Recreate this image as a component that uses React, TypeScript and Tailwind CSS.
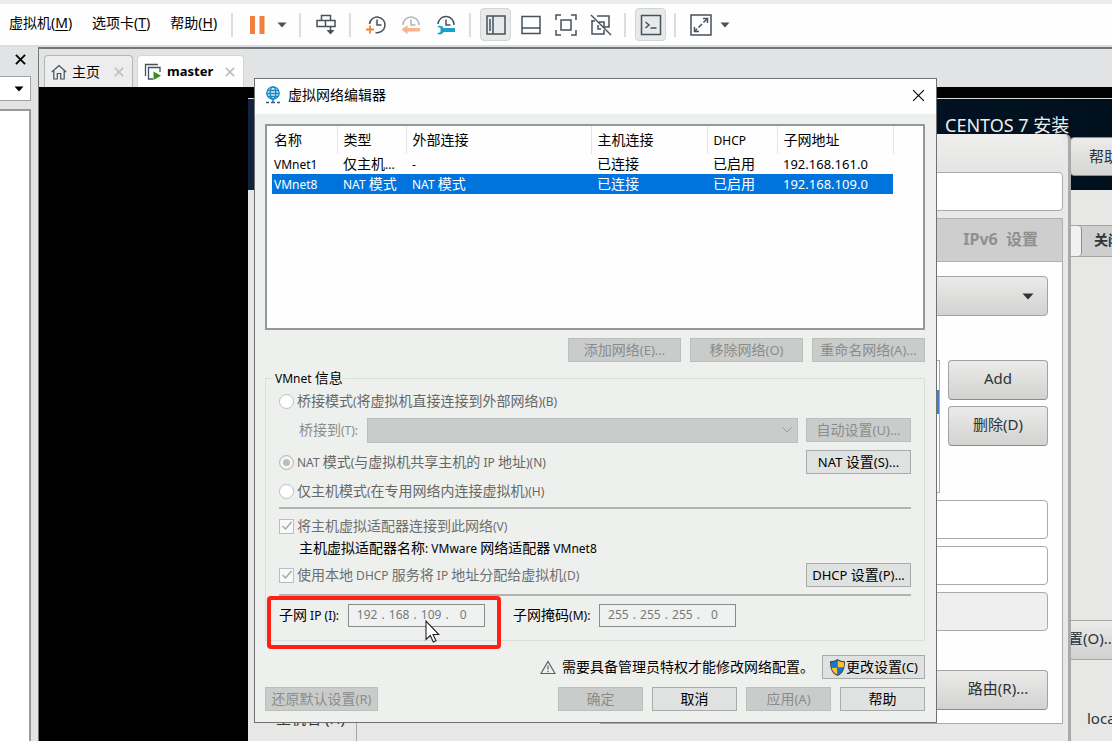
import type { ReactNode } from "react";

const NETWORKS = [
  {
    name: "VMnet1",
    type: "仅主机...",
    external: "-",
    host: "已连接",
    dhcp: "已启用",
    subnet: "192.168.161.0",
    selected: false,
  },
  {
    name: "VMnet8",
    type: "NAT 模式",
    external: "NAT 模式",
    host: "已连接",
    dhcp: "已启用",
    subnet: "192.168.109.0",
    selected: true,
  },
];

const COLUMNS = [
  { title: "名称", width: "w-[65px]" },
  { title: "类型", width: "w-[69px]" },
  { title: "外部连接", width: "w-[185px]" },
  { title: "主机连接", width: "w-[116px]" },
  { title: "DHCP", width: "w-[70px]" },
  { title: "子网地址", width: "w-[116px]" },
];

/* Dialog text: Chinese at 14px, latin runs a step smaller */
function Txt({ children, latin = "text-xs" }: { children: string; latin?: string }) {
  const runs = children.split(/([\u3000-\u9fff]+)/).filter(Boolean);
  return (
    <span className="whitespace-pre">
      {runs.map((run, i) =>
        /[\u3000-\u9fff]/.test(run) ? (
          <span key={i}>{run}</span>
        ) : (
          <span key={i} className={latin}>
            {run}
          </span>
        )
      )}
    </span>
  );
}

function MenuItem({ text, hotkey }: { text: string; hotkey: string }) {
  return (
    <button type="button" className="whitespace-nowrap">
      {text}(<span className="underline underline-offset-2">{hotkey}</span>)
    </button>
  );
}

function Separator() {
  return <div className="mr-[9px] ml-2 h-6 w-0.5 shrink-0 bg-[#dcdddd]" />;
}

function Tool({
  label,
  active,
  children,
}: {
  label: string;
  active?: boolean;
  children: ReactNode;
}) {
  return (
    <button
      type="button"
      aria-label={label}
      className={`flex h-[33px] w-[31px] shrink-0 items-center justify-center rounded ${
        active ? "border border-[#d2d4d5] bg-[#e8eaea]" : ""
      }`}
    >
      <svg
        viewBox="0 0 22 22"
        className="size-[22px] shrink-0"
        fill="none"
        stroke="#46525c"
        strokeWidth="1.5"
      >
        {children}
      </svg>
    </button>
  );
}

function Caret({ label }: { label: string }) {
  return (
    <button
      type="button"
      aria-label={label}
      className="flex h-[33px] w-[18px] shrink-0 items-center justify-center"
    >
      <svg viewBox="0 0 10 6" className="h-[6px] w-[10px]" fill="#46525c">
        <path d="M0.5 0.5h9L5 5.5z" />
      </svg>
    </button>
  );
}

function Toolbar() {
  return (
    <header className="flex h-[47px] items-center border-t-4 border-b-2 border-t-[#ebedec] border-b-[#dcdedd] bg-[#fdfefd] pl-[9px] text-sm">
      <nav className="flex gap-5 pr-[6px] pb-1">
        <MenuItem text="虚拟机" hotkey="M" />
        <MenuItem text="选项卡" hotkey="T" />
        <MenuItem text="帮助" hotkey="H" />
      </nav>
      <Separator />
      <Tool label="挂起">
        <path d="M3 2h5v18H3zM12.500 2h5v18h-5z" fill="#f08040" stroke="none" />
      </Tool>
      <Caret label="电源选项" />
      <Separator />
      <Tool label="发送按键">
        <path d="M6.5 1.500h9v5h-9zM2 6.500h8.500v6H2zM10.500 6.500H20v6h-9.500z" />
        <path d="M15.500 12.500v5" />
        <path d="M11.500 16h8l-4 4.500z" fill="#46525c" stroke="none" />
      </Tool>
      <Separator />
      <div className="flex gap-1">
        <Tool label="拍摄快照">
          <path d="M4.500 10a7.800 7.800 0 1 1 6 8.500" />
          <path d="M12 5.500V11h4.500" />
          <path d="M5 11.500v8M1 15.500h8" stroke="#f08040" strokeWidth="1.800" />
        </Tool>
        <Tool label="恢复快照">
          <g stroke="#aeb4b8">
            <path d="M3 11a8 8 0 1 1 16 0" />
            <path d="M11 5.500V11h4.500" />
          </g>
          <path d="M1.500 15.500l6-4.500v3H20v3.500H7.500v3z" fill="#fab48c" stroke="none" />
        </Tool>
        <Tool label="管理快照">
          <path d="M3 10a8 8 0 1 1 16 1" />
          <path d="M11 5.500V11h4.500" />
          <path
            d="M2 12.500c2.500-1.500 6-.500 6.500 1.500H20v4H8.500C7.500 20.500 4 21 2 19.500l3.500-1.500v-4z"
            fill="#1aa0cc"
            stroke="none"
          />
        </Tool>
      </div>
      <Separator />
      <div className="flex gap-1">
        <Tool label="显示库" active>
          <path d="M2 2h18v18H2zM8 2v18M5 5v12" />
        </Tool>
        <Tool label="缩略图栏">
          <path d="M2 2.500h18v17H2zM2 14h18" />
        </Tool>
        <Tool label="全屏">
          <path d="M1 6V1h5M16 1h5v5M21 16v5h-5M6 21H1v-5M6 6h10v10H6z" />
        </Tool>
        <Tool label="Unity 模式">
          <path d="M7 2h12v11h-5M2 6v14h12v-4M2 7h3M9 8h5v5M8 11v4h3" />
          <path d="M1 1l20 20" />
        </Tool>
      </div>
      <Separator />
      <Tool label="控制台视图" active>
        <path d="M1.500 1.500h19v19h-19z" />
        <path d="M5.500 8l3.500 3-3.500 3M10.500 14h6" />
      </Tool>
      <Separator />
      <Tool label="自由拉伸">
        <path d="M1 1h20v20H1z" />
        <path d="M13 4.500h4.500V9M9 17.500H4.500V13" />
        <path d="M17 5L5 17" strokeDasharray="5 2" />
      </Tool>
      <Caret label="拉伸选项" />
    </header>
  );
}

function Cross({ className }: { className: string }) {
  return (
    <svg viewBox="0 0 12 12" className={className} fill="none" stroke="currentColor">
      <path d="M1 1l10 10M11 1L1 11" />
    </svg>
  );
}

function LibrarySidebar() {
  return (
    <aside className="flex w-8 shrink-0 flex-col bg-[#e1e3e4]">
      <div className="flex h-[29px] items-center justify-end pr-[6px] pb-1">
        <button type="button" aria-label="关闭库">
          <Cross className="size-[11px] stroke-2 text-black" />
        </button>
      </div>
      <button
        type="button"
        aria-label="搜索选项"
        className="flex h-[25px] w-[31px] items-center justify-end border border-l-0 border-[#a0a2a3] bg-white pr-[6px]"
      >
        <svg viewBox="0 0 10 6" className="h-[6px] w-[10px]">
          <path d="M0.500 0.500h9L5 5.500z" />
        </svg>
      </button>
      <div className="mt-2 mr-px flex-1 border-t-2 border-r-2 border-[#97999a] bg-white" />
    </aside>
  );
}

function Tabs() {
  return (
    <div className="flex h-[38px] items-end gap-1 bg-[#e1e3e4] pl-[5px]">
      <div className="flex h-8 w-[89px] items-center rounded-t border border-b-0 border-[#b3b5b6] bg-[#ecedec] pl-[6px]">
        <svg viewBox="0 0 16 16" className="size-4" fill="none" stroke="#46525c" strokeWidth="1.200">
          <path d="M0.800 8L8 1.500 15.200 8M2.800 6.500v8.500h3.500V9.500h3.400V15h3.500V6.500" />
        </svg>
        <a href="#home" className="ml-[5px] text-sm">
          主页
        </a>
        <button type="button" aria-label="关闭主页" className="ml-auto pr-2">
          <Cross className="size-[10px] stroke-2 text-[#bfc0c0]" />
        </button>
      </div>
      <div className="flex h-8 w-[107px] items-center rounded-t border border-b-0 border-[#d5d6d6] bg-[#fdfefd] pl-[6px]">
        <svg viewBox="0 0 18 18" className="size-[18px]" fill="none" stroke="#46525c" strokeWidth="1.300">
          <path d="M1.500 13V1.500H14M9 16H4.500V4.500H16V9" />
          <path d="M9.500 8.500l7.500 4.300-7.500 4.300z" fill="#3f8c1a" stroke="none" />
        </svg>
        <a href="#master" className="ml-[5px] text-[13px] font-bold">
          master
        </a>
        <button type="button" aria-label="关闭 master" className="ml-auto pr-2">
          <Cross className="size-[10px] stroke-2 text-[#bfc0c0]" />
        </button>
      </div>
    </div>
  );
}

/* Installer screen running inside the guest */
function Installer() {
  return (
    <div className="mt-[11px] ml-[209px] flex flex-1 flex-col overflow-hidden border-t border-[#d9ddd8] bg-[#e7e7e6] text-[15px] text-[#2d3436]">
      <div className="h-[91px] shrink-0 bg-linear-to-r from-[#13233f] via-[#04142a] to-[#00101d] pt-[14px]">
        <h1 className="ml-[697px] h-6 text-lg leading-6 whitespace-nowrap text-[#eceeee]">
          CENTOS 7 安装
        </h1>
        <button
          type="button"
          className="ml-[822px] h-[39px] rounded border border-[#8e8e8c] bg-linear-to-b from-[#ececeb] to-[#d5d5d4] pr-8 pl-[18px] whitespace-nowrap"
        >
          帮助！
        </button>
      </div>
      <div className="mt-[35px] ml-[780px] flex h-8 w-[120px] shrink-0 border border-[#a5a5a4] bg-[#cdcecd]">
        <div className="w-[53px] rounded border-r border-[#8e8e8c] bg-[#f1f1f0]" />
        <div className="pl-3 text-[14px] leading-7 font-bold whitespace-nowrap">关闭</div>
      </div>
      <div className="ml-[780px] flex flex-1 flex-col">
        <button
          type="button"
          className="mt-[363px] h-10 w-[120px] shrink-0 border border-[#a5a5a4] bg-linear-to-b from-[#ececeb] to-[#d0d0cf] pb-[3px] pl-6 text-left whitespace-nowrap"
        >
          配置(O)...
        </button>
      </div>
      <div className="mt-auto flex h-[34px] shrink-0">
        <div className="w-[109px] shrink-0 border-r border-[#a5a5a4] pl-7 whitespace-nowrap">
          主机名 (H)
        </div>
        <div className="flex-1 pl-[730px] leading-[22px] whitespace-nowrap">localhost</div>
      </div>
    </div>
  );
}

function GtkButton({ children, className }: { children: string; className: string }) {
  return (
    <button
      type="button"
      className={`h-10 shrink-0 rounded border border-[#a3a3a2] border-b-[#8b8b8a] bg-linear-to-b from-[#ebebea] to-[#d2d2d1] pb-[3px] whitespace-nowrap ${className}`}
    >
      {children}
    </button>
  );
}

/* Connection editor of the guest, mostly covered by the dialog */
function ConnectionEditor() {
  return (
    <section className="absolute top-[47px] left-[561px] flex w-[471px] flex-col rounded-t-md border-r-[3px] border-[#a9aaa9] bg-[#e8e8e7] pr-[5px] pb-10 text-[15px] text-[#2d3436]">
      <div className="h-[38px] rounded-t-md bg-linear-to-b from-[#efefee] to-[#e4e4e3]" />
      <input
        aria-label="连接名称"
        className="h-[39px] w-full rounded border border-[#a9aaa9] bg-white"
      />
      <div className="mt-[7px] flex h-11 items-center justify-end border border-[#b0b1b0] bg-[#cdcecd] pr-6 pb-0.5 text-base font-bold text-[#8e908f]">
        <button type="button" className="whitespace-pre">
          {"IPv6  设置"}
        </button>
      </div>
      <div className="flex flex-col border-r border-b border-[#a9aaa9] bg-[#fdfefd] pt-[14px] pr-[14px] pb-[13px]">
        <button
          type="button"
          aria-label="方法"
          className="flex h-10 items-center justify-end rounded border border-[#a3a3a2] bg-linear-to-b from-[#ebebea] to-[#d2d2d1] pr-[13px]"
        >
          <svg viewBox="0 0 12 7" className="h-[7px] w-3" fill="#2d3436">
            <path d="M0.500 0.500h11L6 6.500z" />
          </svg>
        </button>
        <div className="mt-11 flex gap-2">
          <div className="h-[133px] flex-1 border border-[#a9aaa9] pt-[29px]">
            <div className="h-6 bg-[#4080c8]" />
          </div>
          <div className="flex w-[100px] flex-col gap-[6px]">
            <GtkButton className="">Add</GtkButton>
            <GtkButton className="">删除(D)</GtkButton>
          </div>
        </div>
        <div className="mt-[7px] flex flex-col gap-[7px]">
          <input aria-label="DNS 服务器" className="h-[39px] rounded border border-[#a9aaa9] bg-white" />
          <input aria-label="搜索域" className="h-[39px] rounded border border-[#a9aaa9] bg-white" />
          <input
            aria-label="DHCP 客户端 ID"
            disabled
            className="h-[39px] rounded border border-[#a9aaa9] bg-[#eeefee]"
          />
        </div>
        <GtkButton className="mt-[39px] w-[120px] self-end pl-5">路由(R)...</GtkButton>
      </div>
    </section>
  );
}

function DialogButton({
  children,
  className,
  disabled,
  icon,
}: {
  children: string;
  className: string;
  disabled?: boolean;
  icon?: ReactNode;
}) {
  return (
    <button
      type="button"
      disabled={disabled}
      className={`flex h-6 shrink-0 items-center justify-center border leading-5 ${
        disabled
          ? "border-[#bdbfbd] bg-[#cacccb] text-[#8a8c8b]"
          : "border-[#a9abaa] bg-[#e0e2e1] text-black"
      } ${className}`}
    >
      {icon}
      <Txt latin="text-[13px]">{children}</Txt>
    </button>
  );
}

function ModeRadio({ label, checked, className }: { label: string; checked?: boolean; className?: string }) {
  return (
    <label className={`flex items-center gap-[3px] text-[#666867] ${className ?? ""}`}>
      <input
        type="radio"
        name="mode"
        defaultChecked={checked}
        disabled
        className="size-[15px] appearance-none rounded-full border border-[#bcbebd] bg-white checked:bg-[#bcbebd] checked:shadow-[inset_0_0_0_3px_#f6f7f6]"
      />
      <Txt>{label}</Txt>
    </label>
  );
}

function OptionCheck({ label }: { label: string }) {
  return (
    <label className="flex items-center gap-[3px] text-[#6d6f6e]">
      <span className="grid size-[15px] place-items-center">
        <input
          type="checkbox"
          defaultChecked
          disabled
          className="col-start-1 row-start-1 size-[15px] appearance-none border border-[#bcbebd] bg-[#f8f9f8]"
        />
        <svg
          viewBox="0 0 12 12"
          className="col-start-1 row-start-1 size-3"
          fill="none"
          stroke="#a5a7a6"
          strokeWidth="1.400"
        >
          <path d="M1.500 6l3 3 6-7" />
        </svg>
      </span>
      <Txt>{label}</Txt>
    </label>
  );
}

function IpField({ label, octets }: { label: string; octets: string[] }) {
  return (
    <div
      role="group"
      aria-label={label}
      className="flex h-[23px] w-[137px] items-center border border-[#8a8c8b] bg-[#f0f2f1] pl-[6px] text-xs text-[#77797a]"
    >
      {octets.map((octet, i) => (
        <div key={i} className="flex">
          {i > 0 && <span className="w-2 text-center">.</span>}
          <input
            aria-label={`${label} ${i + 1}`}
            defaultValue={octet}
            disabled
            className="w-6 text-center"
          />
        </div>
      ))}
    </div>
  );
}

function GlobeIcon() {
  return (
    <svg viewBox="0 0 18 18" className="size-[18px]" fill="none" stroke="#1a86c4" strokeWidth="1.300">
      <circle cx="9" cy="7" r="6.200" fill="#d8effa" />
      <ellipse cx="9" cy="7" rx="2.800" ry="6.200" />
      <path d="M3.500 4.500h11M2.800 7.500h12.400M4 10.500h10" />
      <path d="M2 16.500h3M7 16.500h4M13 16.500h3M9 13.500v3" stroke="#2b5f7d" />
    </svg>
  );
}

function ShieldIcon() {
  return (
    <svg viewBox="0 0 18 20" className="h-[19px] w-[17px]">
      <path d="M9 1c2.500 1.800 5 2.300 8 2.300C17 11 15 16.500 9 19 3 16.500 1 11 1 3.300 4 3.300 6.500 2.800 9 1z" fill="#3c4a55" />
      <path d="M8.800 2.500V10H2.600C2.200 8.200 2 6.300 2.100 4.400c2.600 0 4.700-.6 6.700-1.900z" fill="#1577cf" />
      <path d="M9.200 2.500V10h6.200c.4-1.800.6-3.700.5-5.600-2.600 0-4.700-.6-6.700-1.900z" fill="#ffc02e" />
      <path d="M2.700 10.300h6.100v7.400c-3.200-1.500-5.200-4-6.100-7.400z" fill="#ffc02e" />
      <path d="M15.300 10.300H9.200v7.400c3.200-1.500 5.200-4 6.100-7.400z" fill="#1577cf" />
    </svg>
  );
}

function NetworkTable() {
  return (
    <div className="h-[206px] border-2 border-[#96999c] bg-[#fdfefd] pl-[5px]">
      <table className="w-[621px] table-fixed border-collapse text-left leading-5">
        <thead>
          <tr className="h-7">
            {COLUMNS.map((col, i) => (
              <th
                key={col.title}
                className={`${col.width} border-r border-[#e2e3e3] p-0 font-normal ${i === 0 ? "pl-[2px]" : "pl-[6px]"}`}
              >
                <Txt>{col.title}</Txt>
              </th>
            ))}
          </tr>
        </thead>
        <tbody>
          {NETWORKS.map((net) => (
            <tr key={net.name} className={`h-5 ${net.selected ? "bg-[#0073dc] text-white" : "text-black"}`}>
              <td className="p-0 pl-[2px]">
                <Txt>{net.name}</Txt>
              </td>
              <td className="p-0 pl-[6px]">
                <Txt>{net.type}</Txt>
              </td>
              <td className="p-0 pl-[6px]">
                <Txt>{net.external}</Txt>
              </td>
              <td className="p-0 pl-[6px]">
                <Txt>{net.host}</Txt>
              </td>
              <td className="p-0 pl-[6px]">
                <Txt>{net.dhcp}</Txt>
              </td>
              <td className="p-0 pl-[6px]">
                <Txt latin="text-[13px]">{net.subnet}</Txt>
              </td>
            </tr>
          ))}
        </tbody>
      </table>
    </div>
  );
}

function NetworkEditorDialog() {
  return (
    <section
      role="dialog"
      aria-label="虚拟网络编辑器"
      className="absolute top-[78px] left-[254px] flex w-[683px] flex-col border border-[#6f7173] bg-[#eef0ee] text-sm leading-5 text-black"
    >
      <div className="flex h-[35px] items-center bg-[#fdfefd] pr-[11px] pb-[3px] pl-[9px]">
        <GlobeIcon />
        <h2 className="ml-[6px]">虚拟网络编辑器</h2>
        <button type="button" aria-label="关闭" className="ml-auto">
          <Cross className="size-[13px] text-black" />
        </button>
      </div>
      <div className="flex flex-col pt-[10px] pr-[11px] pb-[11px] pl-[10px]">
        <NetworkTable />
        <div className="mt-2 flex justify-end gap-[9px]">
          <DialogButton disabled className="w-[113px]">添加网络(E)...</DialogButton>
          <DialogButton disabled className="w-[113px]">移除网络(O)</DialogButton>
          <DialogButton disabled className="w-[113px]">重命名网络(A)...</DialogButton>
        </div>
        <fieldset className="mt-[7px] border border-[#dbdddc] px-[13px] pb-[6px]">
          <legend className="-ml-[6px] h-[18px] px-[2px] leading-[18px]">
            <Txt>VMnet 信息</Txt>
          </legend>
          <ModeRadio className="h-7" label="桥接模式(将虚拟机直接连接到外部网络)(B)" />
          <div className="flex h-[30px] items-center pl-5 text-[#8a8c8b]">
            <label htmlFor="bridge">
              <Txt>桥接到(T):</Txt>
            </label>
            <div className="mr-2 ml-[9px] grid flex-1 items-center">
              <select
                id="bridge"
                disabled
                className="col-start-1 row-start-1 h-[25px] w-full appearance-none border border-[#bdbfbd] bg-[#cacccb]"
              />
              <svg
                viewBox="0 0 10 6"
                className="pointer-events-none col-start-1 row-start-1 mr-[6px] h-[6px] w-[10px] justify-self-end"
                fill="none"
                stroke="#999b9a"
              >
                <path d="M0.500 0.500L5 5l4.500-4.500" />
              </svg>
            </div>
            <DialogButton disabled className="w-[105px]">自动设置(U)...</DialogButton>
          </div>
          <div className="flex h-[34px] items-center justify-between">
            <ModeRadio checked label="NAT 模式(与虚拟机共享主机的 IP 地址)(N)" />
            <DialogButton className="w-[105px]">NAT 设置(S)...</DialogButton>
          </div>
          <ModeRadio className="h-6" label="仅主机模式(在专用网络内连接虚拟机)(H)" />
          <hr className="mt-1 mb-[3px] border-t-2 border-[#b2b4b3]" />
          <div className="flex h-7 items-center">
            <OptionCheck label="将主机虚拟适配器连接到此网络(V)" />
          </div>
          <p className="h-4 pl-5 leading-4">
            <Txt>主机虚拟适配器名称: VMware 网络适配器 VMnet8</Txt>
          </p>
          <div className="flex h-[38px] items-center justify-between">
            <OptionCheck label="使用本地 DHCP 服务将 IP 地址分配给虚拟机(D)" />
            <DialogButton className="w-[105px]">DHCP 设置(P)...</DialogButton>
          </div>
          <hr className="border-t-2 border-[#b2b4b3]" />
          <div className="flex h-[38px] items-center">
            <Txt>子网 IP (I):</Txt>
            <div className="mr-7 ml-[9px]">
              <IpField label="子网 IP" octets={["192", "168", "109", "0"]} />
            </div>
            <Txt>子网掩码(M):</Txt>
            <div className="ml-[9px]">
              <IpField label="子网掩码" octets={["255", "255", "255", "0"]} />
            </div>
          </div>
        </fieldset>
        <div className="mt-[14px] flex h-6 items-center justify-end">
          <svg viewBox="0 0 16 15" className="h-[15px] w-4" fill="none" stroke="#5b646b" strokeWidth="1.200">
            <path d="M8 1.500L15 13.500H1z" />
            <path d="M8 5.500v4M8 10.800v1.400" />
          </svg>
          <p className="mr-2 ml-[6px]">需要具备管理员特权才能修改网络配置。</p>
          <DialogButton className="w-[103px]" icon={<ShieldIcon />}>
            更改设置(C)
          </DialogButton>
        </div>
        <div className="mt-2 flex gap-[9px]">
          <DialogButton disabled className="mr-auto w-[113px]">还原默认设置(R)</DialogButton>
          <DialogButton disabled className="w-[85px]">确定</DialogButton>
          <DialogButton className="w-[85px]">取消</DialogButton>
          <DialogButton disabled className="w-[85px]">应用(A)</DialogButton>
          <DialogButton className="w-[85px]">帮助</DialogButton>
        </div>
      </div>

      {/* Highlight around the subnet address */}
      <div className="pointer-events-none absolute top-[517px] left-[12px] h-[53px] w-[234px] rounded border-4 border-[#ff2214]" />
      <svg
        viewBox="0 0 15 23"
        className="pointer-events-none absolute top-[541px] left-[170px] h-[23px] w-[15px]"
        fill="#fff"
        stroke="#222"
        strokeWidth="1.100"
      >
        <path d="M1 1v18.500l4.300-4 3 6.500 2.700-1.200-3-6.300h5.800z" />
      </svg>
    </section>
  );
}

export default function App() {
  return (
    <div className="relative flex h-screen flex-col overflow-hidden bg-[#e1e3e4] font-['Noto_Sans','Noto_Sans_CJK_SC',sans-serif] text-black">
      <Toolbar />
      <div className="flex min-h-0 flex-1">
        <LibrarySidebar />
        <main className="ml-[6px] flex min-w-0 flex-1 flex-col border-t-2 border-l border-[#747675]">
          <Tabs />
          <div className="relative flex min-h-0 flex-1 flex-col overflow-hidden bg-black">
            <Installer />
            <ConnectionEditor />
          </div>
        </main>
      </div>
      <NetworkEditorDialog />
    </div>
  );
}
